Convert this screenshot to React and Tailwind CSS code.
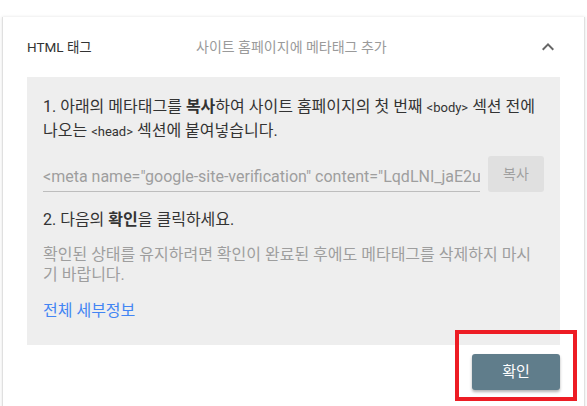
import React from 'react';

const ChevronUp = () => (
  <svg width="24" height="24" viewBox="0 0 24 24" className="text-[#666]">
    <path d="M7.41 15.41 12 10.83l4.59 4.58L18 14l-6-6-6 6z" fill="currentColor" />
  </svg>
);

export default function App() {
  return (
    <div className="relative w-[587px] h-[406px] overflow-hidden bg-white pt-[17px] pl-[2px] pr-[2px] font-['Roboto','Noto_Sans_CJK_KR',sans-serif]">
      <div className="h-[420px] bg-white border-l border-r border-[#e0e0e0] shadow-[0_0_3px_rgba(0,0,0,0.12)]">
        {/* header */}
        <div className="flex items-center h-[60px] px-6">
          <div className="w-[169px] text-[13.5px] text-[#333]">HTML 태그</div>
          <div className="flex-1 text-[14px] text-[#9a9a9a]">사이트 홈페이지에 메타태그 추가</div>
          <ChevronUp />
        </div>

        {/* steps */}
        <div className="mx-6 bg-[#eeeeee] px-4 pt-[18px] pb-[23px]">
          <p className="text-[16px] leading-[23px] text-[#333]">
            1. 아래의 메타태그를 <span className="font-bold">복사</span>하여 사이트 홈페이지의 첫 번째 <span className="text-[13px]">&lt;body&gt;</span> 섹션 전에 나오는 <span className="text-[13px]">&lt;head&gt;</span> 섹션에 붙여넣습니다.
          </p>

          <div className="flex items-center gap-2 mt-[13px]">
            <div className="flex-1 overflow-hidden border-b border-[#bdbdbd] h-[35px] flex items-center pt-[6px]">
              <span className="whitespace-nowrap text-[16px] text-[#9e9e9e]">
                &lt;meta name="google-site-verification" content="LqdLNI_jaE2uXw7Hk0vR" /&gt;
              </span>
            </div>
            <button className="w-[56px] h-[36px] rounded-[3px] bg-[#e0e0e0] text-[14px] text-[#a0a0a0]">복사</button>
          </div>

          <p className="mt-[16px] text-[16px] leading-[23px] text-[#333]">
            2. 다음의 <span className="font-bold">확인</span>을 클릭하세요.
          </p>

          <p className="mt-[14px] text-[16px] leading-[20px] text-[#9e9e9e]">
            확인된 상태를 유지하려면 확인이 완료된 후에도 메타태그를 삭제하지 마시기 바랍니다.
          </p>

          <a className="block mt-[14px] text-[16px] leading-[23px] text-[#4285f4]">전체 세부정보</a>
        </div>

        <div className="flex justify-end px-6 mt-[9px]">
          <button className="w-[88px] h-[36px] rounded-[3px] bg-[#607d8b] text-white text-[15px] shadow-[0_2px_3px_rgba(0,0,0,0.3)]">
            확인
          </button>
        </div>
      </div>

      {/* annotation */}
      <div className="absolute left-[455px] top-[330px] w-[122px] h-[71px] border-4 border-[#ed1c24]" />
    </div>
  );
}
